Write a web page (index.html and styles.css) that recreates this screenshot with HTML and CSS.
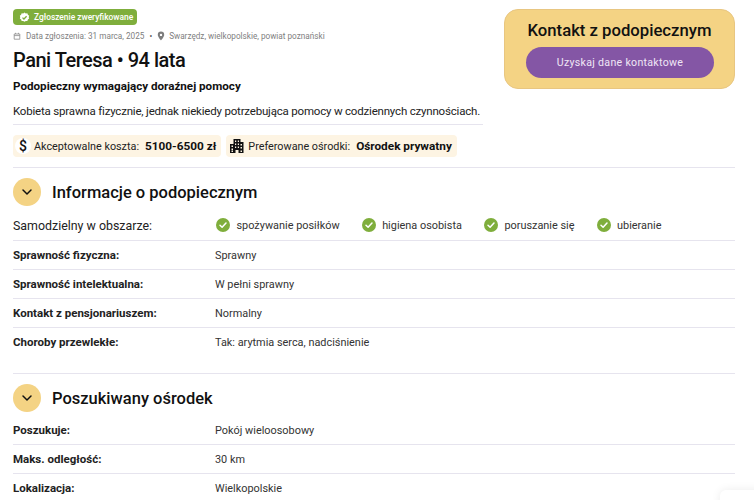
FILE: index.html
```html
<!DOCTYPE html>
<html lang="pl">
<head>
<meta charset="utf-8">
<title>Pani Teresa</title>
<link rel="stylesheet" href="styles.css">
</head>
<body>
<main class="page">
  <header class="top">
    <div class="intro">
      <div class="badge">
        <svg class="badge-icon" viewBox="0 0 12 12"><path fill="#fff" d="M6 .5l1.4 1 1.7-.1.6 1.6 1.4 1-.5 1.6.5 1.6-1.4 1-.6 1.6-1.7-.1-1.4 1-1.4-1-1.7.1-.6-1.6-1.4-1 .5-1.6-.5-1.6 1.4-1 .6-1.6 1.7.1z"/><path fill="none" stroke="#7fae3c" stroke-width="1.4" d="M3.8 6.100l1.600 1.600 2.900-3"/></svg>
        <span>Zgłoszenie zweryfikowane</span>
      </div>
      <div class="meta">
        <svg class="meta-cal" viewBox="0 0 10 10"><path fill="none" stroke="#8a8a8a" stroke-width="1" d="M1.500 2.500h7v6.500h-7zM1.500 4.500h7M3.200 1v1.500M6.800 1v1.500"/></svg>
        <span>Data zgłoszenia: 31 marca, 2025</span>
        <span class="dot">•</span>
        <svg class="meta-pin" viewBox="0 0 10 12"><path fill="#7d7d7d" fill-rule="evenodd" d="M5 .5a4 4 0 0 1 4 4c0 2.800-4 7-4 7s-4-4.200-4-7a4 4 0 0 1 4-4zm0 2.600a1.500 1.500 0 1 0 0 3 1.500 1.500 0 0 0 0-3z"/></svg>
        <span>Swarzędz, wielkopolskie, powiat poznański</span>
      </div>
      <h1 class="title">Pani Teresa • 94 lata</h1>
      <p class="subtitle">Podopieczny wymagający doraźnej pomocy</p>
      <p class="desc">Kobieta sprawna fizycznie, jednak niekiedy potrzebująca pomocy w codziennych czynnościach.</p>
      <div class="chips">
        <div class="chip">
          <span class="chip-round">$</span>
          <span class="chip-label">Akceptowalne koszta:</span>
          <strong class="chip-value">5100-6500 zł</strong>
        </div>
        <div class="chip">
          <svg class="chip-icon" viewBox="0 0 16 16"><path fill="#111" fill-rule="evenodd" d="M4.500 1h7v3h3v11H1V6h3.500zM6 2.500v1.500h1.200V2.500zm2.800 0v1.500H10V2.500zM6 5.500V7h1.200V5.500zm2.800 0V7H10V5.500zM11.500 6v1.500h1.500V6zM2.500 7.500V9H4V7.500zM6 8.500V10h1.200V8.500zm2.800 0V10H10V8.500zM11.500 9v1.500h1.500V9zM2.500 10.500V12H4v-1.500zM6.500 12v3h3v-3zm5 .5V14h1.500v-1.500zm-9 0V14H4v-1.500z"/></svg>
          <span class="chip-label">Preferowane ośrodki:</span>
          <strong class="chip-value">Ośrodek prywatny</strong>
        </div>
      </div>
    </div>
    <aside class="contact">
      <h2 class="contact-title">Kontakt z podopiecznym</h2>
      <button class="contact-btn" type="button">Uzyskaj dane kontaktowe</button>
    </aside>
  </header>

  <section class="section first">
    <div class="section-head">
      <span class="toggle"><svg viewBox="0 0 12 8"><path fill="none" stroke="#111" stroke-width="1.500" stroke-linecap="round" stroke-linejoin="round" d="M2 2l4 4 4-4"/></svg></span>
      <h2 class="section-title">Informacje o podopiecznym</h2>
    </div>
    <div class="abilities">
      <span class="abilities-label">Samodzielny w obszarze:</span>
      <ul class="ability-list">
        <li class="ability"><svg class="check" viewBox="0 0 14 14"><circle cx="7" cy="7" r="7" fill="#7fae3c"/><path fill="none" stroke="#fff" stroke-width="1.500" stroke-linecap="round" stroke-linejoin="round" d="M4 7.200l2.100 2L10 5"/></svg>spożywanie posiłków</li>
        <li class="ability"><svg class="check" viewBox="0 0 14 14"><circle cx="7" cy="7" r="7" fill="#7fae3c"/><path fill="none" stroke="#fff" stroke-width="1.500" stroke-linecap="round" stroke-linejoin="round" d="M4 7.200l2.100 2L10 5"/></svg>higiena osobista</li>
        <li class="ability"><svg class="check" viewBox="0 0 14 14"><circle cx="7" cy="7" r="7" fill="#7fae3c"/><path fill="none" stroke="#fff" stroke-width="1.500" stroke-linecap="round" stroke-linejoin="round" d="M4 7.200l2.100 2L10 5"/></svg>poruszanie się</li>
        <li class="ability"><svg class="check" viewBox="0 0 14 14"><circle cx="7" cy="7" r="7" fill="#7fae3c"/><path fill="none" stroke="#fff" stroke-width="1.500" stroke-linecap="round" stroke-linejoin="round" d="M4 7.200l2.100 2L10 5"/></svg>ubieranie</li>
      </ul>
    </div>
    <dl class="rows">
      <div class="row"><dt>Sprawność fizyczna:</dt><dd>Sprawny</dd></div>
      <div class="row"><dt>Sprawność intelektualna:</dt><dd>W pełni sprawny</dd></div>
      <div class="row"><dt>Kontakt z pensjonariuszem:</dt><dd>Normalny</dd></div>
      <div class="row"><dt>Choroby przewlekłe:</dt><dd>Tak: arytmia serca, nadciśnienie</dd></div>
    </dl>
  </section>

  <section class="section second">
    <div class="section-head">
      <span class="toggle"><svg viewBox="0 0 12 8"><path fill="none" stroke="#111" stroke-width="1.500" stroke-linecap="round" stroke-linejoin="round" d="M2 2l4 4 4-4"/></svg></span>
      <h2 class="section-title">Poszukiwany ośrodek</h2>
    </div>
    <dl class="rows">
      <div class="row"><dt>Poszukuje:</dt><dd>Pokój wieloosobowy</dd></div>
      <div class="row"><dt>Maks. odległość:</dt><dd>30 km</dd></div>
      <div class="row"><dt>Lokalizacja:</dt><dd>Wielkopolskie</dd></div>
    </dl>
  </section>
</main>
<div class="widget"></div>
</body>
</html>
```

FILE: styles.css
```css
* { box-sizing: border-box; }
html, body { height: 500px; overflow: hidden; }
body {
  margin: 0;
  background: #fff;
  color: #111;
  font-family: "Roboto", "Liberation Sans", sans-serif;
}
.page { width: 722px; margin-left: 13px; }
.top { display: flex; justify-content: space-between; align-items: flex-start; padding-top: 9px; height: 168px; border-bottom: 1px solid #e6e4ee; }
.intro { width: 470px; }
.badge {
  display: flex; align-items: center; gap: 4px;
  height: 16px; width: 124px; padding-left: 6px;
  background: #7fae3c; color: #fff; border-radius: 4px;
  font-size: 8.400px; font-weight: 500; white-space: nowrap;
}
.badge-icon { width: 11px; height: 11px; flex: none; }
.meta {
  display: flex; align-items: center; height: 12px; margin-top: 5px;
  font-size: 8.200px; color: #808080; white-space: nowrap;
}
.meta-cal { width: 8px; height: 8px; margin-right: 5px; }
.dot { margin: 0 5px 0 5px; color: #555; }
.meta-pin { width: 8px; height: 10px; margin-right: 4px; }
.title { margin: 5px 0 0; font-size: 20px; line-height: 26px; font-weight: 500; letter-spacing: -.5px; }
.subtitle { margin: 5px 0 0; font-size: 11.650px; line-height: 16px; font-weight: 700; }
.desc { margin: 9px 0 0; padding-bottom: 5px; font-size: 11.500px; line-height: 16px; color: #222; letter-spacing: -.19px; border-bottom: 1px solid #e6e4ee; white-space: nowrap; }
.chips { display: flex; gap: 5px; margin-top: 10px; }
.chip { display: flex; align-items: center; height: 22px; padding: 0 5px 0 2px; background: #fdf4e3; border-radius: 4px; font-size: 10.800px; white-space: nowrap; }
.chip-round { width: 16px; height: 16px; border-radius: 50%; background: #fff; margin-right: 3px; display: flex; align-items: center; justify-content: center; font-size: 14px; font-weight: 500; }
.chip-icon { width: 16px; height: 16px; margin: 0 3px 0 1px; }
.chip-label { margin-right: 6px; color: #222; }
.chip-value { font-size: 11.800px; font-weight: 700; }
.contact { width: 231px; height: 80px; background: #f4d384; border: 1px solid #e8c681; border-radius: 14px; padding: 11px 21px 0; text-align: center; }
.contact-title { margin: 0; font-size: 16.700px; line-height: 20px; font-weight: 500; white-space: nowrap; }
.contact-btn { display: block; width: 188px; height: 31px; margin: 6px 0 0; border: 0; border-radius: 16px; background: #8456a5; color: #f0e6f5; font: 400 10.600px "Roboto", sans-serif; letter-spacing: .3px; }
.section-head { display: flex; align-items: center; gap: 11px; }
.first .section-head { margin-top: 10px; }
.toggle { width: 28px; height: 28px; border-radius: 50%; background: #f4d384; display: flex; align-items: center; justify-content: center; flex: none; }
.toggle svg { width: 12px; height: 8px; }
.section-title { margin: 0; padding-top: 2px; font-size: 16.500px; line-height: 26px; font-weight: 500; white-space: nowrap; }
.abilities { display: flex; align-items: center; height: 35px; padding-top: 4px; border-bottom: 1px solid #e6e4ee; }
.abilities-label { width: 203px; font-size: 12.400px; color: #222; }
.ability-list { display: flex; margin: 0; padding: 0; list-style: none; }
.ability { display: flex; align-items: center; gap: 6.500px; font-size: 10.900px; color: #333; white-space: nowrap; margin-right: 22px; }
.check { width: 14px; height: 14px; flex: none; }
.rows { margin: 0; }
.row { display: flex; align-items: center; height: 29px; border-bottom: 1px solid #e6e4ee; font-size: 10.900px; line-height: 14px; }
.row:last-child { border-bottom: 0; height: 28px; }
.row dt { width: 202px; font-size: 11.500px; font-weight: 700; color: #222; }
.row dd { margin: 0; padding-top: 1px; color: #333; }
.second { margin-top: 17px; border-top: 1px solid #e6e4ee; padding-top: 10px; }
.second .rows { margin-top: 4px; }
.widget { position: absolute; left: 720px; top: 490px; width: 60px; height: 40px; background: #fff; border-radius: 6px; box-shadow: 0 0 10px rgba(0,0,0,.08); }
```
